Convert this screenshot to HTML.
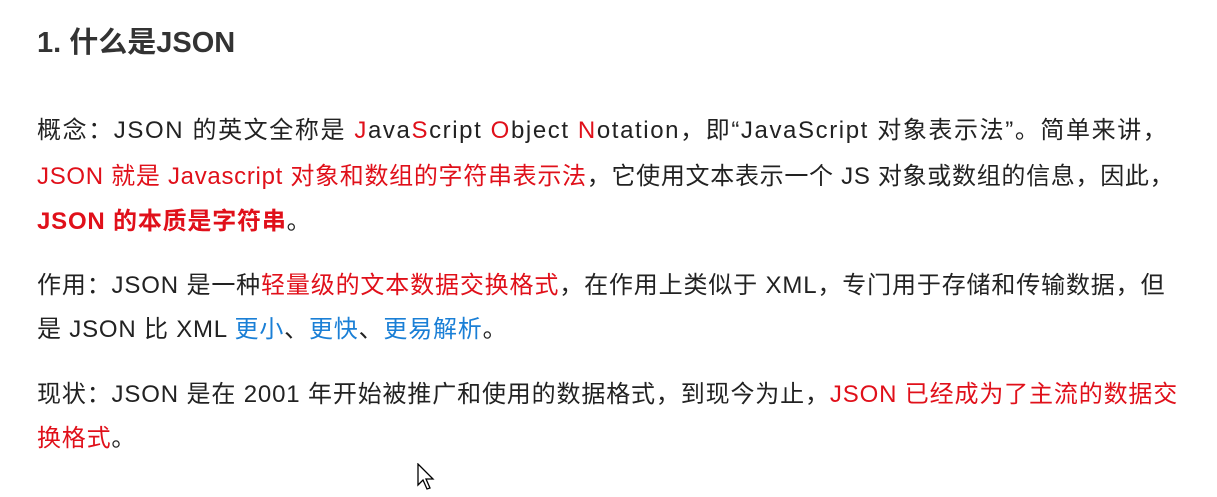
<!DOCTYPE html>
<html><head><meta charset="utf-8"><style>
body{margin:0;width:1217px;height:497px;background:#fff;overflow:hidden;position:relative;font-family:"Liberation Sans","Noto Sans CJK SC",sans-serif;}
.l{position:absolute;left:37px;font-size:24px;line-height:30px;color:#222;white-space:nowrap;letter-spacing:0.8px}
.r{color:#e0101a}.b{color:#1a7fd6}.bd{font-weight:bold;color:#e0101a}
h1{position:absolute;left:37px;top:23px;margin:0;font-size:29px;line-height:40px;color:#333;font-weight:bold;}
</style></head><body>
<h1>1. 什么是JSON</h1>
<div class="l" style="top:116px;letter-spacing:1.6px">概念：JSON 的英文全称是 <span class="r">J</span>ava<span class="r">S</span>cript <span class="r">O</span>bject <span class="r">N</span>otation，即“JavaScript 对象表示法”。简单来讲，</div>
<div class="l" style="top:162px;letter-spacing:0.7px"><span class="r">JSON 就是 Javascript 对象和数组的字符串表示法</span>，它使用文本表示一个 JS 对象或数组的信息，因此，</div>
<div class="l" style="top:207px"><span class="bd">JSON 的本质是字符串</span>。</div>
<div class="l" style="top:271px;letter-spacing:0.85px">作用：JSON 是一种<span class="r">轻量级的文本数据交换格式</span>，在作用上类似于 XML，专门用于存储和传输数据，但</div>
<div class="l" style="top:315px">是 JSON 比 XML <span class="b">更小</span>、<span class="b">更快</span>、<span class="b">更易解析</span>。</div>
<div class="l" style="top:380px;letter-spacing:0.85px">现状：JSON 是在 2001 年开始被推广和使用的数据格式，到现今为止，<span class="r">JSON 已经成为了主流的数据交</span></div>
<div class="l" style="top:424px"><span class="r">换格式</span>。</div>
<svg style="position:absolute;left:417px;top:463px" width="20" height="28" viewBox="0 0 20 28"><path d="M1 1 L1 22 L6 17 L10 26 L13 25 L9 16 L16 16 Z" fill="#fff" stroke="#000" stroke-width="1.3"/></svg>
</body></html>
